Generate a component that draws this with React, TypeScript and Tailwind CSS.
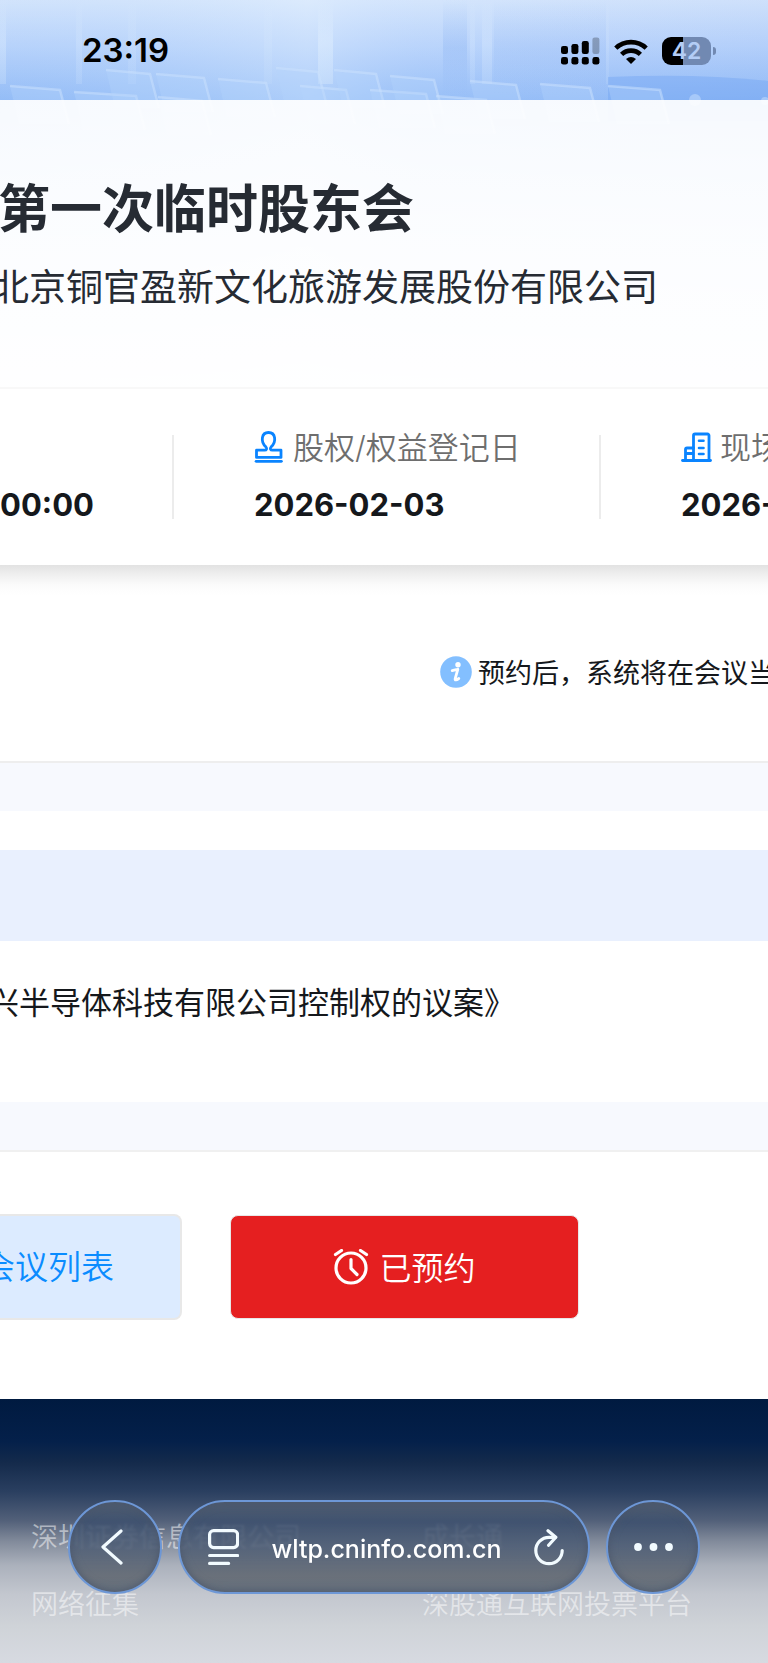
import type { ReactNode } from "react";

const seats = [
  { x: 10, y: 86, w: 50 },
  { x: 74, y: 92, w: 62 },
  { x: 106, y: 70, w: 44 },
  { x: 156, y: 74, w: 48 },
  { x: 158, y: 97, w: 44 },
  { x: 218, y: 79, w: 48 },
  { x: 276, y: 68, w: 42 },
  { x: 300, y: 86, w: 46 },
  { x: 334, y: 70, w: 42 },
  { x: 370, y: 90, w: 56 },
  { x: 390, y: 76, w: 44 },
  { x: 436, y: 96, w: 50 },
  { x: 470, y: 81, w: 46 },
  { x: 540, y: 84, w: 50 },
  { x: 608, y: 86, w: 52 },
];

const columns = [
  { x: 0, w: 6, o: 0.3 },
  { x: 76, w: 6, o: 0.2 },
  { x: 128, w: 8, o: 0.15 },
  { x: 264, w: 8, o: 0.12 },
  { x: 318, w: 15, o: 0.4 },
  { x: 470, w: 5, o: 0.2 },
  { x: 482, w: 10, o: 0.25 },
  { x: 606, w: 3, o: 0.15 },
];

function HallBackdrop() {
  return (
    <svg
      className="absolute inset-x-0 top-0 h-[390px] w-full"
      viewBox="0 0 768 390"
      preserveAspectRatio="none"
      aria-hidden="true"
    >
      <defs>
        <linearGradient id="sky" x1="0" y1="0" x2="0" y2="1">
          <stop offset="0" stopColor="#d9e8fc" />
          <stop offset="0.12" stopColor="#bad4fb" />
          <stop offset="0.26" stopColor="#92bbf6" />
          <stop offset="1" stopColor="#c5dcfb" />
        </linearGradient>
        <linearGradient id="tint" x1="0" y1="0" x2="1" y2="0">
          <stop offset="0" stopColor="#9cc4fa" stopOpacity="0.12" />
          <stop offset="0.4" stopColor="#e0efff" stopOpacity="0.35" />
          <stop offset="0.55" stopColor="#b8d5ff" stopOpacity="0.15" />
          <stop offset="1" stopColor="#7fa8f4" stopOpacity="0.12" />
        </linearGradient>
        <linearGradient id="pillar" x1="0" y1="0" x2="0" y2="1">
          <stop offset="0" stopColor="#e6f3ff" stopOpacity="0" />
          <stop offset="0.5" stopColor="#e6f3ff" />
          <stop offset="1" stopColor="#e6f3ff" stopOpacity="0.7" />
        </linearGradient>
        <linearGradient id="curtain" x1="0" y1="0" x2="0" y2="1">
          <stop offset="0" stopColor="#86b0f2" stopOpacity="0" />
          <stop offset="0.5" stopColor="#86b0f2" stopOpacity="0.3" />
          <stop offset="1" stopColor="#86b0f2" stopOpacity="0" />
        </linearGradient>
      </defs>
      <rect width="768" height="390" fill="url(#sky)" />
      <rect width="768" height="390" fill="url(#tint)" />
      {columns.map((c) => (
        <rect key={c.x} x={c.x} width={c.w} height="84" fill="url(#pillar)" opacity={c.o} />
      ))}
      <rect x="443" width="24" height="96" fill="url(#curtain)" />
      <rect x="494" width="112" height="96" fill="url(#curtain)" opacity="0.5" />
      <path d="M608 77q90 -4 160 4v40h-160z" fill="#6fa2f2" opacity="0.4" />
      {seats.map((s) => (
        <g key={s.x}>
          <path d={`M${s.x} ${s.y}l${s.w} 4l9 34h-${s.w}z`} fill="#b5d3fb" fillOpacity="0.35" />
          <path
            d={`M${s.x} ${s.y}l${s.w} 4l9 34`}
            fill="none"
            stroke="#cbe1fd"
            strokeOpacity="0.5"
            strokeWidth="2.5"
          />
        </g>
      ))}
      <circle cx="695" cy="100" r="6" fill="#b5d3fb" opacity="0.7" />
      <circle cx="765" cy="101" r="4" fill="#b5d3fb" opacity="0.7" />
    </svg>
  );
}

function SignalIcon() {
  return (
    <svg width="39" height="28" viewBox="0 0 39 28" aria-hidden="true">
      <rect x="0" y="9" width="7" height="8" rx="2.2" />
      <rect x="10.4" y="7" width="7" height="10" rx="2.2" />
      <rect x="20.8" y="4" width="7" height="13" rx="2.2" />
      <rect x="31.4" y="0.5" width="7" height="16.5" rx="2.2" opacity="0.25" />
      <rect x="0" y="20" width="7" height="7.6" rx="2.4" />
      <rect x="10.4" y="20" width="7" height="7.6" rx="2.4" />
      <rect x="20.8" y="20" width="7" height="7.6" rx="2.4" />
      <rect x="31.4" y="20" width="7" height="7.6" rx="2.4" />
    </svg>
  );
}

function WifiIcon() {
  return (
    <svg width="34" height="25" viewBox="0 0 34 25" fill="none" stroke="#000" strokeWidth="4.6" aria-hidden="true">
      <path d="M1.8 9.2a22 22 0 0 1 30.4 0" />
      <path d="M7.6 15.4a13.6 13.6 0 0 1 18.8 0" />
      <path d="M12 20q5-4 10 0l-5 5z" fill="#000" stroke="none" />
    </svg>
  );
}

function Battery() {
  return (
    <div className="flex items-center gap-0.5">
      <div className="flex h-7 w-[49px] items-center justify-center rounded-[9px] bg-[linear-gradient(90deg,#000_43%,#7189b2_43%)]">
        <span className="text-[23px] leading-7 font-semibold text-[#b4cdf5]">42</span>
      </div>
      <div className="h-2 w-[3px] rounded-r-full bg-[#7189b2]" />
    </div>
  );
}

function StampIcon() {
  return (
    <svg width="31" height="32" viewBox="0 0 31 32" fill="none" stroke="#0a84ff" strokeWidth="2.8" strokeLinecap="round" strokeLinejoin="round" aria-hidden="true">
      <path d="M2.500 26.400v-7.200h8.200c1.900 0 2.500-1.800 1.300-3.100C6.100 10.500 7.500 1.500 14.500 1.500s8.400 9 2.500 14.600c-1.200 1.300-.6 3.100 1.300 3.100h8.700v7.200z" />
      <path d="M2.100 30.300h25.300" />
    </svg>
  );
}

function BuildingIcon() {
  return (
    <svg width="31" height="30" viewBox="0 0 31 30" fill="none" stroke="#0a84ff" strokeWidth="2.8" strokeLinecap="round" strokeLinejoin="round" aria-hidden="true">
      <path d="M1.500 28.500h28" />
      <path d="M12.500 28V3.500a1.500 1.500 0 0 1 1.500-1.500h12.500a1.500 1.500 0 0 1 1.500 1.500V28" />
      <path d="M4.500 28V17.500a1.500 1.500 0 0 1 1.500-1.500h6.500M5 21.500h7" />
      <path d="M18 8.800h4.500M18 16h4.500M18 22h4.500" strokeWidth="2.600" />
    </svg>
  );
}

function InfoIcon() {
  return (
    <svg width="32" height="32" viewBox="0 0 32 32" aria-hidden="true">
      <circle cx="16" cy="16" r="15.800" fill="#83bfff" />
      <circle cx="18" cy="8.700" r="2.700" fill="#fff" />
      <path d="M12.200 14.600c2.400-.3 4-.9 5.600-1.300l-2.600 9.400c-.5 2 1.200 1.400 3.600-.2" fill="none" stroke="#fff" strokeWidth="2.800" strokeLinecap="round" strokeLinejoin="round" />
    </svg>
  );
}

function AlarmIcon() {
  return (
    <svg width="36" height="36" viewBox="0 0 36 36" fill="none" stroke="#fff" strokeWidth="3.2" strokeLinecap="round" strokeLinejoin="round" aria-hidden="true">
      <circle cx="18" cy="19" r="15" />
      <path d="M18 10.500v9l6 6M2.500 5.500l6-4M33.500 5.500l-6-4" />
    </svg>
  );
}

function InfoCell({ icon, label, value }: { icon: ReactNode; label: string; value: string }) {
  return (
    <div className="min-w-0 pl-20">
      <div className="flex h-6 items-center gap-2 text-[31px] font-[350] text-[#6e6e6e]">
        <span className="shrink-0">{icon}</span>
        <span className="pt-0.5">{label}</span>
      </div>
      <div className="mt-8 text-[31px] leading-7 font-bold text-[#15181c]">{value}</div>
    </div>
  );
}

const glass =
  "flex h-[94px] items-center rounded-full border-2 border-[#6d97d6] bg-[linear-gradient(180deg,#535f70d8,#3d506ed8_22%,#4b5b73d8_50%,#5f6670e0_82%,#5c6774e8)] text-[#f2fbff] backdrop-blur-[1px] shadow-[inset_0_0_8px_#4a566a]";

function BrowserBar() {
  return (
    <nav className="fixed inset-x-0 bottom-[69px] flex gap-4 px-[68px]" aria-label="浏览器">
      <button type="button" aria-label="返回" className={`${glass} w-[94px] shrink-0 justify-center`}>
        <svg width="28" height="36" viewBox="0 0 28 36" fill="none" stroke="currentColor" strokeWidth="3.2" strokeLinecap="round" strokeLinejoin="round">
          <path d="M20 2L2 18l18 16" />
        </svg>
      </button>
      <div className={`${glass} min-w-0 flex-1 justify-between pr-6 pl-7`}>
        <button type="button" aria-label="页面菜单" className="shrink-0">
          <svg width="31" height="36" viewBox="0 0 31 36" fill="none" stroke="currentColor" strokeWidth="3.2" strokeLinecap="round">
            <rect x="1.600" y="1.600" width="28" height="17" rx="4" />
            <path d="M1.600 26.500h28M1.600 34.400h19" />
          </svg>
        </button>
        <button type="button" className="pt-1 text-[25px] leading-9 font-medium text-white">
          wltp.cninfo.com.cn
        </button>
        <button type="button" aria-label="刷新" className="shrink-0">
          <svg width="30" height="37" viewBox="0 0 30 37" fill="none" stroke="currentColor" strokeWidth="3.2" strokeLinecap="round" strokeLinejoin="round">
            <path d="M28.200 21.500a13.200 13.200 0 1 1-13.200-13.200h6.500" />
            <path d="M14 1.800l7.800 6.500-7.200 8" />
          </svg>
        </button>
      </div>
      <button type="button" aria-label="更多" className={`${glass} w-[94px] shrink-0 justify-center`}>
        <svg width="39" height="8" viewBox="0 0 39 8" fill="currentColor">
          <circle cx="4" cy="4" r="3.900" />
          <circle cx="19.500" cy="4" r="3.900" />
          <circle cx="35" cy="4" r="3.900" />
        </svg>
      </button>
    </nav>
  );
}

export default function App() {
  return (
    <div className="flex min-h-screen flex-col overflow-hidden bg-white font-[Inter,'Noto_Sans_CJK_SC',sans-serif] whitespace-nowrap text-[#15181c]">
      <div className="relative">
        <HallBackdrop />
        <div className="relative flex h-[100px] items-center justify-between pt-0.5 pr-[52px] pl-[82px]">
          <time className="text-[33px] font-semibold text-black">23:19</time>
          <div className="flex items-center gap-3.5">
            <SignalIcon />
            <WifiIcon />
            <Battery />
          </div>
        </div>

        <header className="relative border-b-2 border-[#f8f8f8] bg-[linear-gradient(180deg,#ffffffeb,#fffffff5_50%,#fffffffc)] pt-[78px] pb-[76px] text-[#262b33]">
          <h1 className="-ml-0.5 text-[52px] leading-[64px] font-bold">第一次临时股东会</h1>
          <p className="mt-[22px] -ml-2 text-[37px] leading-[47px]">北京铜官盈新文化旅游发展股份有限公司</p>
        </header>

        <section className="relative grid grid-cols-[174px_427px_1fr] divide-x-2 divide-[#ececec] bg-white py-[46px]">
          <div className="flex items-end">
            <div className="text-[31px] leading-7 font-bold">00:00</div>
          </div>
          <InfoCell icon={<StampIcon />} label="股权/权益登记日" value="2026-02-03" />
          <InfoCell icon={<BuildingIcon />} label="现场会议" value="2026-02-10" />
        </section>
      </div>

      <section className="flex items-center gap-1.5 border-b-2 border-[#eee] bg-[linear-gradient(180deg,#e2e2e2,#f1f1f1_11px,#fbfbfb_20px,#fff_30px)] pt-[91px] pb-[73px] pl-[440px]">
        <span className="shrink-0">
          <InfoIcon />
        </span>
        <p className="pt-1 text-[27px] leading-6">预约后，系统将在会议当天</p>
      </section>

      <section className="border-y-[48px] border-[#f7f9fe] pt-[39px]">
        <div className="h-[91px] bg-[#e9f0fe]" />
        <p className="-ml-3 pt-[38px] pb-[75px] text-[31px] leading-[48px]">兴半导体科技有限公司控制权的议案》</p>
      </section>

      <section className="flex items-center gap-12 border-t-2 border-[#f0f0f0] pt-[62px] pb-[79px]">
        <a
          href="#meetings"
          className="flex h-[106px] w-[182px] items-center justify-end rounded-r-lg border-2 border-l-0 border-[#e8e8e8] bg-[#dcebff] pt-0.5 pr-[66px] text-[33px] font-[350] text-[#0a8cff]"
        >
          会议列表
        </a>
        <button
          type="button"
          className="flex h-[104px] w-[349px] items-center justify-center gap-2.5 rounded-lg border border-[#e8e8e8] bg-[#e51f20] text-[32px] font-[350] text-white"
        >
          <AlarmIcon />
          <span className="pt-1">已预约</span>
        </button>
      </section>

      <footer className="grid flex-1 grid-cols-[391px_1fr] content-start gap-y-[31px] bg-[linear-gradient(180deg,#001a40,#04204a_16%,#142a4b_24%,#2a3f60_35%,#526079_46%,#828b9b_54%,#abb1bc_63%,#c3c7cf_74%,#cfd3d8_86%,#d7dae1)] pt-[121px] pl-[31px] text-[27px] leading-9 font-[350] text-white/50">
        <a href="#company">深圳证券信息有限公司</a>
        <a href="#growth">成长通</a>
        <a href="#proxy">网络征集</a>
        <a href="#vote">深股通互联网投票平台</a>
      </footer>

      <BrowserBar />
    </div>
  );
}
